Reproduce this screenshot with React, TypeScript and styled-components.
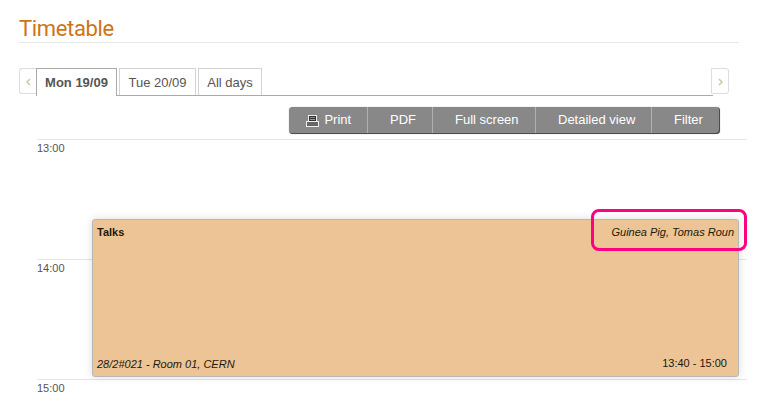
import React from "react";
import styled, { createGlobalStyle } from "styled-components";

const GlobalStyle = createGlobalStyle`
  body {
    margin: 0;
    background: #fff;
    font-family: "Liberation Sans", Arial, sans-serif;
    color: #555;
  }
  * { box-sizing: border-box; }
`;

const Page = styled.main`
  width: 761px;
  height: 418px;
  overflow: hidden;
  padding: 14px 0 0 19px;
`;

const Title = styled.h1`
  margin: 0;
  width: 720px;
  height: 29px;
  border-bottom: 1px solid #e8e8e8;
  font: 400 22px/29px Roboto, sans-serif;
  letter-spacing: -0.35px;
  color: #cf7413;
`;

const TabBar = styled.nav`
  display: flex;
  align-items: flex-start;
  width: 710px;
  height: 28px;
  margin-top: 25px;
`;

const Arrow = styled.button<{ $side: "left" | "right" }>`
  display: flex;
  align-items: center;
  justify-content: center;
  width: ${(p) => (p.$side === "left" ? 17 : 18)}px;
  height: 26px;
  padding: 2px 0 0 1px;
  background: #fff;
  border: 1px solid #ddd;
  border-radius: ${(p) => (p.$side === "left" ? "3px 0 0 3px" : "0 3px 3px 0")};
  ${(p) => (p.$side === "left" ? "border-right: 0;" : "margin-left: -2px;")}
`;

const Tabs = styled.div`
  display: flex;
  flex: none;
  gap: 2px;
  width: 677px;
  height: 28px;
  background: linear-gradient(#aaa, #aaa) 0 27px / 100% 1px no-repeat;
`;

const Tab = styled.button<{ $active?: boolean; $width: number }>`
  display: flex;
  align-items: flex-start;
  justify-content: center;
  width: ${(p) => p.$width}px;
  height: ${(p) => (p.$active ? 28 : 27)}px;
  padding: 1px 0 0;
  background: #fff;
  border: 1px solid ${(p) => (p.$active ? "#aaa" : "#d3d3d3")};
  border-bottom: 0;
  font: ${(p) => (p.$active ? 700 : 400)} 13px/25px "Liberation Sans", Arial, sans-serif;
  color: #555;
  white-space: nowrap;
`;

const Toolbar = styled.div`
  display: flex;
  width: 431px;
  height: 27px;
  margin: 11px 0 0 270px;
  background: #888;
  border-radius: 4px;
  box-shadow: inset -1px -1px 0 #4c4c4c, 0 0 1px #888;
`;

const Action = styled.button<{ $width: number; $inset?: number }>`
  display: flex;
  align-items: center;
  width: ${(p) => p.$width}px;
  height: 26px;
  padding: 0 0 1px ${(p) => p.$inset ?? 22}px;
  background: none;
  border: 0;
  border-right: 1px solid #b0b0b0;
  font: 13px/25px "Liberation Sans", Arial, sans-serif;
  color: #fff;
  white-space: nowrap;
  &:last-child { border-right: 0; }
  svg { flex: none; margin: 2px 5.4px 0 0; }
`;

const Schedule = styled.section`
  position: relative;
  width: 710px;
  margin: 5px 0 0 18px;
`;

const Hour = styled.div`
  height: 120px;
  border-top: 1px solid #e5e5e5;
  font-size: 11px;
  line-height: 16px;
`;

const Session = styled.article`
  position: absolute;
  left: 55px;
  top: 80px;
  display: flex;
  flex-direction: column;
  justify-content: space-between;
  width: 647px;
  height: 158px;
  padding: 5px 4px;
  background: #ecc496;
  border: 1px solid #b8b8b8;
  border-radius: 3px;
  box-shadow: 0 0 8px rgba(0, 0, 0, 0.14);
  font-size: 11px;
  line-height: 14px;
  color: #24180a;
`;

const SessionRow = styled.div`
  display: flex;
  justify-content: space-between;
`;

const Time = styled.span`
  margin: -1px 7px 1px 0;
`;

const Highlight = styled.div`
  position: absolute;
  left: 554px;
  top: 70px;
  width: 156px;
  height: 42px;
  border: 3px solid #ff0080;
  border-radius: 8px;
`;

const Chevron = ({ right }: { right?: boolean }) => (
  <svg width="6" height="8" viewBox="0 0 6 8" fill="none" stroke="#c9c9a4" strokeWidth="1.5">
    <path d={right ? "M1 1 4 4 1 7" : "M4 1 1 4 4 7"} />
  </svg>
);

const Printer = () => (
  <svg width="13" height="12" viewBox="0 0 13 12" shapeRendering="crispEdges">
    <path fill="#eee" d="M2 0h9v6h2v6H0V6h2z" />
    <path fill="#333" d="M3 1h7v5H3z" />
    <path fill="#888" d="M4 2h5v1H4z" />
    <path fill="#999" d="M4 4h5v1H4z" />
    <path fill="#eee" d="M2 6h9v1H2z" />
    <path fill="#666" d="M1 7h11v4H1z" />
  </svg>
);

export default function App() {
  return (
    <Page>
      <GlobalStyle />
      <Title>Timetable</Title>
      <TabBar>
        <Arrow $side="left" aria-label="Previous days"><Chevron /></Arrow>
        <Tabs>
          <Tab $active $width={81}>Mon 19/09</Tab>
          <Tab $width={77}>Tue 20/09</Tab>
          <Tab $width={64}>All days</Tab>
        </Tabs>
        <Arrow $side="right" aria-label="Next days"><Chevron right /></Arrow>
      </TabBar>
      <Toolbar>
        <Action $width={79} $inset={17}><Printer />Print</Action>
        <Action $width={65}>PDF</Action>
        <Action $width={103}>Full screen</Action>
        <Action $width={116}>Detailed view</Action>
        <Action $width={68}>Filter</Action>
      </Toolbar>
      <Schedule>
        <Hour>13:00</Hour>
        <Hour>14:00</Hour>
        <Hour>15:00</Hour>
        <Session>
          <SessionRow>
            <strong>Talks</strong>
            <em>Guinea Pig, Tomas Roun</em>
          </SessionRow>
          <SessionRow>
            <em>28/2#021 - Room 01, CERN</em>
            <Time>13:40 - 15:00</Time>
          </SessionRow>
        </Session>
        <Highlight />
      </Schedule>
    </Page>
  );
}
